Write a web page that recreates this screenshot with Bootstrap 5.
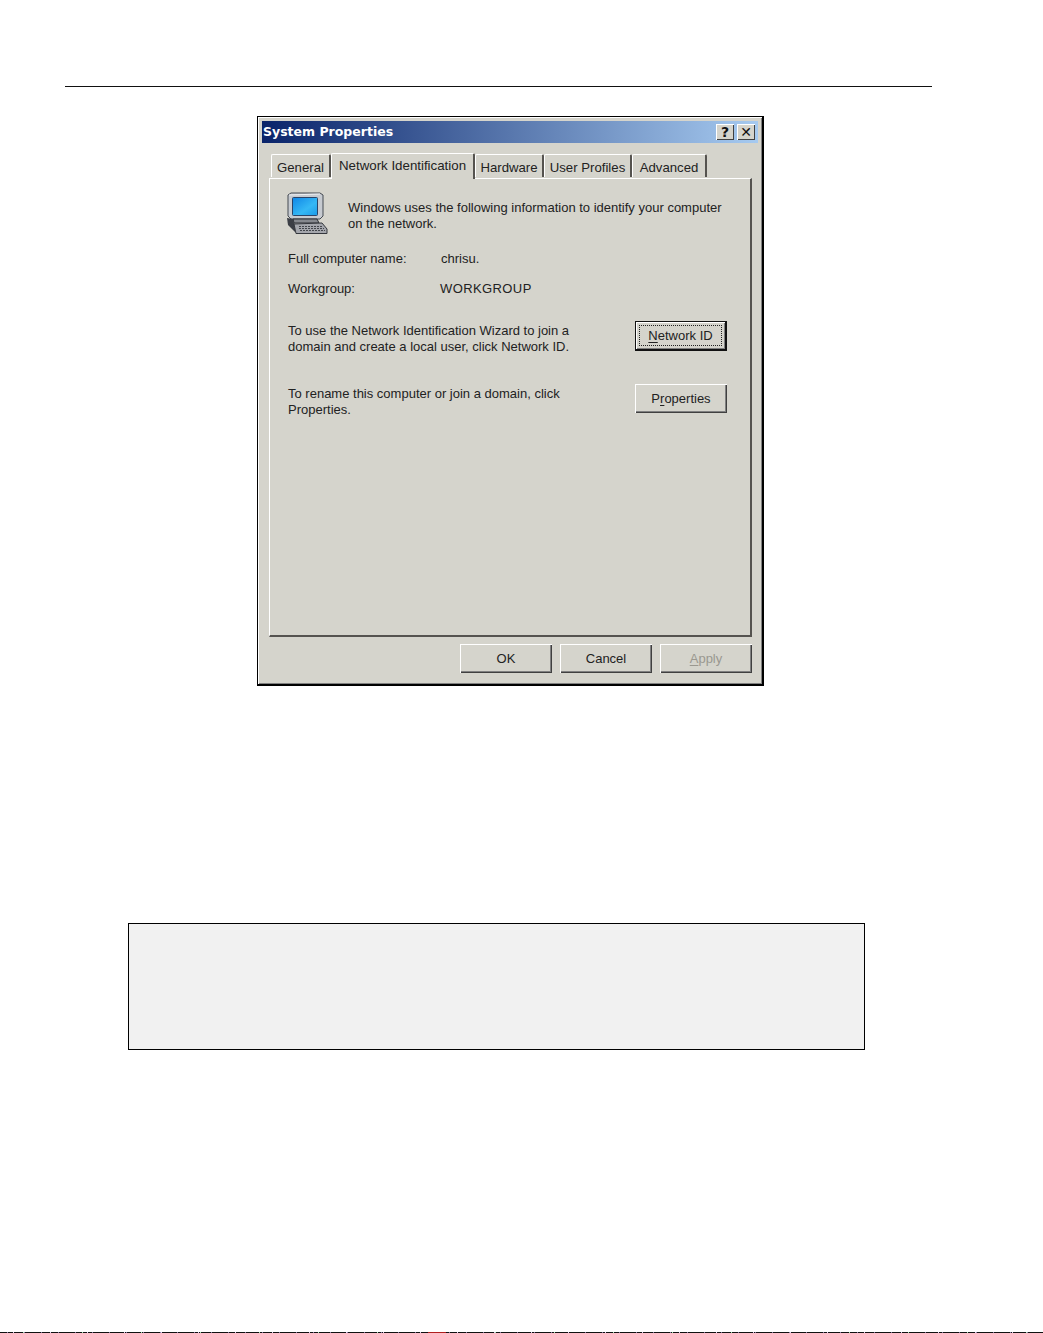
<!DOCTYPE html>
<html lang="en">
<head>
<meta charset="utf-8">
<title>System Properties</title>
<link href="https://cdn.jsdelivr.net/npm/bootstrap@5.3.0/dist/css/bootstrap.min.css" rel="stylesheet">
<style>
html, body { height: 1333px; overflow: hidden; }
body { background: #fff; color: #222; font-family: "Liberation Sans", Arial, sans-serif; font-size: 13px; line-height: 16px; }
.pg-rule { height: 1px; background: #111; margin: 86px 111px 0 65px; }
.win { width: 507px; height: 570px; margin: 29px 0 0 257px; background: #d5d4cc; border: 1px solid #000; border-width: 1px 2px 2px 1px; padding: 4px 3px 0 4px; box-shadow: inset 1px 1px 0 #fff, inset -1px -1px 0 #808080; }
.win-title { height: 22px; margin-right: 1px; padding: 0 3px 0 1px; background: linear-gradient(90deg, #0a246a, #a6caf0); color: #fff; font: 700 12.5px/22px "DejaVu Sans", sans-serif; }
.cap-set { gap: 3px; }
.cap-btn { width: 18px; height: 16px; background: #d5d4cc; box-shadow: inset 1px 1px 0 #fff, inset -1px -1px 0 #404040; color: #111; font: 700 14px/16px "DejaVu Sans", sans-serif; text-align: center; }
.tabs-row { margin: 10px 0 0 9px; height: 25px; align-items: flex-end; position: relative; z-index: 1; }
.tab-it { height: 23px; line-height: 26px; text-align: center; font-size: 13.2px; border-top: 1px solid #fff; border-left: 1px solid #fff; border-right: 2px solid #55534f; margin-bottom: 1px; white-space: nowrap; border-radius: 2px 2px 0 0; }
.tab-it:nth-child(1) { width: 60px; }
.tab-it:nth-child(2) { width: 144px; }
.tab-it:nth-child(3) { width: 69px; }
.tab-it:nth-child(4) { width: 88px; }
.tab-it:nth-child(5) { width: 75px; }
.tab-it.tab-on { height: 26px; line-height: 23px; margin-bottom: -1px; background: #d5d4cc; font-size: 13.3px; }
.panel-box { width: 483px; height: 459px; margin-left: 7px; padding: 13px 23px 0 18px; border-top: 1px solid #fff; border-left: 1px solid #fff; border-right: 2px solid #55534f; border-bottom: 2px solid #55534f; }
.sys-ico { width: 42px; height: 42px; margin-left: -2px; flex: none; }
.intro-txt { margin: 8px 0 0 20px; white-space: nowrap; }
.info-lbl { width: 153px; }
.wg-val { margin-left: -1px; letter-spacing: .4px; }
.gap-a { margin-top: 17px; }
.gap-b { margin-top: 14px; }
.gap-c { margin-top: 24px; }
.gap-d { margin-top: 29px; }
.para-txt { width: 320px; padding-top: 2px; }
.win-btn.btn { width: 92px; height: 29px; padding: 0; border: 0; border-radius: 0; background: #d5d4cc; color: #222; font-size: 13px; line-height: 27px; box-shadow: inset 1px 1px 0 #fff, inset -1px -1px 0 #404040, inset -2px -2px 0 #808080; }
.win-btn.btn-def { height: 30px; border: 1px solid #111; border-right-width: 2px; border-bottom-width: 2px; position: relative; box-shadow: inset 1px 1px 0 #fff, inset -1px -1px 0 #808080; }
.win-btn.btn-def::after { content: ""; position: absolute; inset: 3px 3px 3px 3px; border: 1px dotted #222; }
.win-btn.btn-off { color: #9a9890; }
.foot-btns { margin: 7px 7px 0 0; gap: 8px; }
.u-key { text-decoration: underline; text-underline-offset: 2px; }
.note-box { width: 737px; height: 127px; margin: 237px 0 0 128px; background: #f1f1f1; border: 1px solid #000; }
.noise-strip { height: 1px; margin-top: 282px;
  background:
    linear-gradient(90deg, transparent 428px, #b02020 428px 446px, transparent 446px),
    repeating-linear-gradient(90deg, transparent 0 13px, #d8c8e8 13px 14px, transparent 14px 37px),
    repeating-linear-gradient(90deg, transparent 0 23px, #a0e0b0 23px 24px, transparent 24px 59px),
    repeating-linear-gradient(90deg, transparent 0 7px, #8878a0 7px 8px, transparent 8px 17px),
    #111; }
</style>
</head>
<body>
<div class="pg-rule"></div>
<div class="win">
  <div class="win-title d-flex justify-content-between align-items-center">
    <span>System Properties</span>
    <span class="d-flex cap-set"><span class="cap-btn">?</span><span class="cap-btn">✕</span></span>
  </div>
  <div class="tabs-row d-flex">
    <div class="tab-it">General</div>
    <div class="tab-it tab-on">Network Identification</div>
    <div class="tab-it">Hardware</div>
    <div class="tab-it">User Profiles</div>
    <div class="tab-it">Advanced</div>
  </div>
  <div class="panel-box">
    <div class="d-flex">
      <svg class="sys-ico" viewBox="0 0 42 42" xmlns="http://www.w3.org/2000/svg">
        <defs><linearGradient id="scr" x1="0" y1="0" x2="1" y2="1"><stop offset="0" stop-color="#0f86e6"/><stop offset=".6" stop-color="#35b8f5"/><stop offset="1" stop-color="#1a9ae8"/></linearGradient></defs>
        <path d="M2 3 L5 1 L34 1 L37 3 L37 24 L34 27 L5 27 L2 24 Z" fill="#c6cad0" stroke="#454a52"/>
        <path d="M3 3 L34 2" stroke="#eef0f2"/>
        <rect x="6.500" y="5.500" width="25" height="18" rx="1" fill="url(#scr)" stroke="#2a4468"/>
        <path d="M7 27 H31 L33 31 H8 Z" fill="#85888e" stroke="#2c2f35"/>
        <path d="M1 26 L7 27 L9 35 L9 40 L2 33 Z" fill="#3c3f46"/>
        <path d="M8 32 L36 31 L41 37 L41 41.500 L10 41.500 Z" fill="#a4a6ac" stroke="#34373d"/>
        <path d="M13 34.500 H36 M13 36.500 H38 M14 38.500 H39" stroke="#43464c" stroke-dasharray="2 1"/>
      </svg>
      <div class="intro-txt">Windows uses the following information to identify your computer<br>on the network.</div>
    </div>
    <div class="d-flex gap-a"><div class="info-lbl">Full computer name:</div><div>chrisu.</div></div>
    <div class="d-flex gap-b"><div class="info-lbl">Workgroup:</div><div class="wg-val">WORKGROUP</div></div>
    <div class="d-flex justify-content-between gap-c">
      <div class="para-txt">To use the Network Identification Wizard to join a domain and create a local user, click Network ID.</div>
      <button type="button" class="btn win-btn btn-def"><span class="u-key">N</span>etwork ID</button>
    </div>
    <div class="d-flex justify-content-between gap-d">
      <div class="para-txt">To rename this computer or join a domain, click Properties.</div>
      <button type="button" class="btn win-btn">P<span class="u-key">r</span>operties</button>
    </div>
  </div>
  <div class="foot-btns d-flex justify-content-end">
    <button type="button" class="btn win-btn">OK</button>
    <button type="button" class="btn win-btn">Cancel</button>
    <button type="button" class="btn win-btn btn-off"><span class="u-key">A</span>pply</button>
  </div>
</div>
<div class="note-box"></div>
<div class="noise-strip"></div>
<script src="https://cdn.jsdelivr.net/npm/bootstrap@5.3.0/dist/js/bootstrap.bundle.min.js"></script>
</body>
</html>
